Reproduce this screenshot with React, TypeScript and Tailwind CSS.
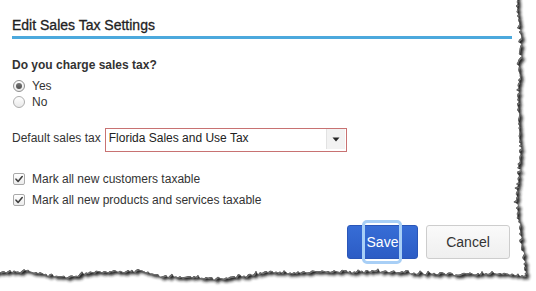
import React from 'react'

// anchor points for the torn right and bottom edges of the screenshot
const rightAnchors: [number, number][] = [
  [-10, 517], [10, 517], [30, 520], [60, 519], [100, 518], [150, 520],
  [200, 516], [230, 519], [260, 524], [276, 526],
]
const bottomAnchors: [number, number][] = [
  [526, 275], [500, 273], [460, 274], [420, 273], [380, 271], [330, 271],
  [300, 272], [265, 272], [230, 278], [200, 277], [160, 276], [140, 270],
  [125, 271], [90, 272], [70, 277], [55, 276], [25, 270], [0, 272], [-10, 272],
]

function lerp(anchors: [number, number][], t: number, desc = false) {
  for (let i = 0; i < anchors.length - 1; i++) {
    const [a0, v0] = anchors[i]
    const [a1, v1] = anchors[i + 1]
    const inside = desc ? t <= a0 && t >= a1 : t >= a0 && t <= a1
    if (inside) return v0 + ((t - a0) / (a1 - a0)) * (v1 - v0)
  }
  return anchors[anchors.length - 1][1]
}

function tornPath() {
  let seed = 11
  const rand = () => (seed = (seed * 16807) % 2147483647) / 2147483647
  const jitter = () => {
    const r = rand()
    return (rand() - 0.5) * (r > 0.8 ? 5.5 : 2.6)
  }
  const pts: string[] = ['M-10 -10']
  for (let y = -10; y <= 275; y += 2) {
    pts.push(`L${(lerp(rightAnchors, y) + jitter()).toFixed(1)} ${y}`)
  }
  for (let x = 526; x >= -10; x -= 2) {
    pts.push(`L${x} ${(lerp(bottomAnchors, x, true) + jitter()).toFixed(1)}`)
  }
  return pts.join(' ') + ' Z'
}

function TornEdge() {
  const paper = tornPath()
  return (
    <svg
      className="absolute inset-0 pointer-events-none"
      width="536"
      height="291"
      viewBox="0 0 536 291"
    >
      <defs>
        <clipPath id="outside">
          <path d={`M0 0H536V291H0Z ${paper}`} clipRule="evenodd" />
        </clipPath>
        <filter id="soft" x="-10%" y="-10%" width="120%" height="120%">
          <feGaussianBlur stdDeviation="1.8" />
        </filter>
      </defs>
      <g clipPath="url(#outside)">
        <path d={paper} fill="#151515" opacity="0.95" transform="translate(3.5 3.5)" filter="url(#soft)" />
        <path d={paper} fill="#6e6e6e" transform="translate(1 1.4)" />
      </g>
    </svg>
  )
}

function Radio({ checked, label }: { checked?: boolean; label: string }) {
  return (
    <label className="flex items-center h-[16px]">
      <span
        className={`ml-[1px] w-[12px] h-[12px] rounded-full border flex items-center justify-center bg-gradient-to-b from-white to-[#e9e9e9] ${
          checked ? 'border-[#8f8f8f]' : 'border-[#adadad]'
        }`}
      >
        {checked && <span className="w-[6px] h-[6px] rounded-full bg-gradient-to-b from-[#777] to-[#4f4f4f]" />}
      </span>
      <span className="ml-[7px] text-[12px] leading-[16px] text-[#333]">{label}</span>
    </label>
  )
}

function Check({ label }: { label: string }) {
  return (
    <label className="flex items-center h-[16px]">
      <span className="ml-[1px] w-[12px] h-[12px] rounded-[2px] border border-[#a9a9a9] bg-gradient-to-b from-white to-[#ececec] flex items-center justify-center">
        <svg width="10" height="10" viewBox="0 0 10 10">
          <path d="M2 5.2 L4.1 7.4 L8.2 2.6" fill="none" stroke="#404040" strokeWidth="1.6" strokeLinecap="round" strokeLinejoin="round" />
        </svg>
      </span>
      <span className="ml-[7px] text-[12px] leading-[16px] text-[#333]">{label}</span>
    </label>
  )
}

export default function App() {
  return (
    <div className="relative w-[536px] h-[291px] overflow-hidden bg-white font-['Liberation_Sans',Arial,sans-serif] text-[#333]">
      <div className="pl-[12px] w-[512px]">
        {/* Header */}
        <h2 className="pt-[17px] pb-[3px] text-[14px] leading-[16px] text-[#222] [-webkit-text-stroke:0.3px_#222] border-b-[3px] border-[#4ca9dd]">
          Edit Sales Tax Settings
        </h2>

        {/* Charge question */}
        <p className="mt-[19px] text-[12px] leading-[14px] font-bold text-[#333]">Do you charge sales tax?</p>
        <div className="mt-[6px] flex flex-col">
          <Radio checked label="Yes" />
          <Radio label="No" />
        </div>

        {/* Default tax */}
        <div className="mt-[18px] flex items-start">
          <span className="pt-[3px] text-[12px] leading-[14px] text-[#333]">Default sales tax</span>
          <div className="ml-[4px] w-[242px] h-[24px] border border-[#c87272] bg-white flex items-start justify-between">
            <span className="pl-[3px] pt-[2px] text-[12px] leading-[14px] text-[#222]">Florida Sales and Use Tax</span>
            <span className="mr-[1px] w-[19px] h-[20px] bg-[#f2f2f2] border-l border-[#e2e2e2] flex items-center justify-center">
              <svg width="8" height="5" viewBox="0 0 8 5">
                <path d="M0.5 0.5 H7.5 L4 4.5 Z" fill="#262626" />
              </svg>
            </span>
          </div>
        </div>

        {/* Taxable defaults */}
        <div className="mt-[19px] flex flex-col gap-[5px]">
          <Check label="Mark all new customers taxable" />
          <Check label="Mark all new products and services taxable" />
        </div>

        {/* Actions */}
        <div className="mt-[17px] flex justify-end gap-[8px] pr-[2px]">
          <button className="relative w-[71px] h-[34px] rounded-[3px] border border-[#2a56b8] bg-gradient-to-b from-[#376dd6] to-[#2c5cc5] text-white text-[14px]">
            Save
            <span className="absolute left-[14px] top-[-6px] w-[40px] h-[44px] rounded-[5px] border-[3px] border-[#a8cff6]" />
          </button>
          <button className="w-[84px] h-[34px] rounded-[3px] border border-[#cdcdcd] bg-gradient-to-b from-[#fafafa] to-[#efefef] text-[#333] text-[14px]">
            Cancel
          </button>
        </div>
      </div>
      <TornEdge />
    </div>
  )
}
